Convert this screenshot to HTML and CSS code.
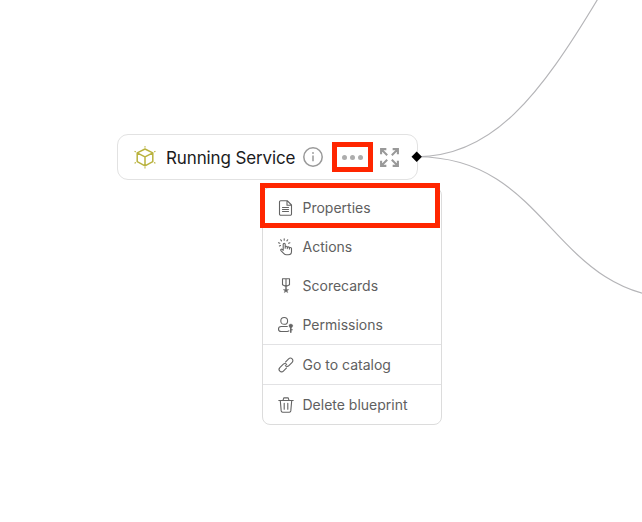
FILE: index.html
```html
<!DOCTYPE html>
<html lang="en">
<head>
<meta charset="utf-8">
<title>Blueprint graph</title>
<link rel="stylesheet" href="styles.css">
</head>
<body>
<main class="canvas">
  <section class="node">
    <svg class="cube" viewBox="0 0 22 24" fill="none" stroke="#b9b23e"><path stroke-width="1.5" stroke-linejoin="round" d="M11 4l7.800 3.800v8.800L11 20.800l-7.800-4.200V7.800zM3.200 7.800l7.800 4 7.800-4M11 11.800v9"/><path stroke-width="1.200" stroke-linecap="round" d="M11 1.500v.6M11 22.600v.3M1 6.500l.4.200M21 6.500l-.4.200M1 18l.5-.3M21 18l-.5-.3"/></svg>
    <h1 class="title">Running Service</h1>
    <svg class="info" viewBox="0 0 20 20" fill="none" stroke="#999"><circle cx="10" cy="10" r="9.200" stroke-width="1.500"/><path stroke-width="1.500" d="M10 8.600v5.600"/><circle cx="10" cy="6" r=".9" fill="#999" stroke="none"/></svg>
    <button class="more" aria-label="More"><i></i><i></i><i></i></button>
    <svg class="expand" viewBox="0 0 20 20" fill="none" stroke="#999" stroke-width="2"><path d="M2 7V2h5M13 2h5v5M18 13v5h-5M7 18H2v-5M2.500 2.500l5.300 5.300M17.500 2.500l-5.300 5.300M17.500 17.500l-5.300-5.300M2.500 17.500l5.300-5.300"/></svg>
  </section>
  <nav class="menu">
    <a class="item"><svg class="icon" viewBox="0 0 16 16"><path d="M2.700.7h6.500l4.300 4.300v9a1.200 1.200 0 0 1-1.200 1.200H2.700a1.200 1.200 0 0 1-1.200-1.200V1.900A1.200 1.200 0 0 1 2.700.7zM9 .9V5.300h4.300M4.500 7.500h6M4.500 9.500h6M4.500 11.500h6"/></svg>Properties</a>
    <a class="item"><svg class="icon" viewBox="0 0 16 16"><path d="M5.200 11V5.300a1 1 0 0 1 2 0v4M7.200 8.300a1 1 0 0 1 2.100 0v1.300M9.300 8.900a1 1 0 0 1 2.100 0v1.200M11.400 9.500a1 1 0 0 1 2.100 0v3c0 2-1.300 3.300-3.300 3.300H8.400c-1.100 0-1.800-.4-2.500-1.200L2.900 11.600c-.6-.9.4-1.800 1.200-1.200l1.100.9"/><path d="M6.200-.3v1.500M2.700.8l.8 1.100M9.700.8l-.8 1.100M.5 3.800l1.300.5M10.600 4.300l1.300-.5M1.400 7l1.100-.5"/></svg>Actions</a>
    <a class="item"><svg class="icon" viewBox="0 0 16 16"><path d="M4.500.8h7v6L8 8.500 4.500 6.800zM8 .8v9.500M4.500 .8h7"/><path class="solid" d="M8 9.600l.7 1.900 2.100.1-1.600 1.200.6 2L8 13.600l-1.800 1.200.6-2-1.600-1.200 2.100-.1z"/></svg>Scorecards</a>
    <a class="item"><svg class="icon" viewBox="0 0 16 16"><circle cx="6.200" cy="3.900" r="3.400"/><path d="M9.300 9.500H3.200C1.500 9.500.5 10.500.5 11.900c0 1.500 1.100 2.600 2.700 2.600h6c.8 0 1.300-.2 1.700-.6"/><circle class="solid" cx="12.800" cy="8.800" r="1.900"/><path stroke-width="1.500" d="M12.800 10v5.200"/><path d="M13 12.800h1.300"/></svg>Permissions</a>
    <hr class="rule">
    <a class="item"><svg class="icon" viewBox="0 0 16 16"><g transform="rotate(-45 8 8)"><path d="M6.300 10.500H1.800a2.500 2.500 0 0 1 0-5h4.600a2.500 2.500 0 0 1 2.500 2.500M9.700 5.500h4.500a2.500 2.500 0 0 1 0 5H9.600A2.500 2.500 0 0 1 7.100 8"/></g></svg>Go to catalog</a>
    <hr class="rule">
    <a class="item"><svg class="icon" viewBox="0 0 16 16"><path d="M.8 3.500h14.400M5 3.300L5.800.9h4.400l.8 2.400M2.300 3.700l.9 10.200c.1.800.6 1.300 1.400 1.300h6.800c.8 0 1.300-.5 1.400-1.300l.9-10.200M6.200 6.300v6M9.800 6.300v6"/></svg>Delete blueprint</a>
  </nav>
  <svg class="edges" viewBox="0 0 642 522" fill="none"><path stroke="#b5b5b8" stroke-width="1.150" d="M417 156.700C493 156.700 540 95 597.500-.5M417 156.700C551 156.700 551 299 685 299"/><path fill="#000" d="M416.700 151.500l5.200 5.200-5.200 5.200-5.200-5.200z"/></svg>
  <div class="mark mark-more"></div>
  <div class="mark mark-item"></div>
</main>
</body>
</html>
```
FILE: styles.css
```css
body { margin: 0; background: #fff; }
.canvas { position: relative; width: 642px; height: 522px; overflow: hidden; font-family: Inter, "Liberation Sans", sans-serif; }
.node { position: absolute; left: 117px; top: 134px; width: 301px; height: 46px; box-sizing: border-box; display: flex; align-items: center; padding-left: 15.5px; border: 1px solid #e2e2e2; border-radius: 11px; }
.cube { width: 22px; height: 24px; margin-right: 10.5px; }
.title { margin: 2px 0 0; width: 129px; white-space: nowrap; font-size: 17px; line-height: 24px; letter-spacing: -.13px; font-weight: 400; color: #1b1b1d; }
.info { width: 20px; height: 20px; margin: 0 0 0 7.5px; }
.more { display: flex; gap: 3px; width: 40px; height: 30px; margin-left: 9.5px; padding: 0; align-items: center; justify-content: center; border: 0; background: none; }
.more i { width: 5px; height: 5px; border-radius: 50%; background: #adadad; }
.expand { width: 21px; height: 21px; margin-left: 7px; }
.menu { position: absolute; left: 262px; top: 187px; width: 180px; height: 238px; box-sizing: border-box; border: 1px solid #dcdcdc; border-radius: 8px; background: #fff; }
.item { display: flex; align-items: center; height: 39px; padding-left: 14.5px; gap: 9px; font-size: 14px; color: #606060; white-space: nowrap; }
.icon { width: 16px; height: 16px; overflow: visible; fill: none; stroke: #646464; stroke-width: 1.1; stroke-linecap: round; stroke-linejoin: round; }
.solid { fill: #646464; stroke-width: .3; }
.rule { height: 1px; margin: 0; border: 0; background: #e2e2e4; }
.edges { position: absolute; left: 0; top: 0; width: 642px; height: 522px; pointer-events: none; }
.mark { position: absolute; box-sizing: border-box; border: 5px solid #ff2600; pointer-events: none; }
.mark-more { left: 332px; top: 142px; width: 41px; height: 30px; }
.mark-item { left: 260px; top: 183px; width: 180px; height: 45px; }
```
